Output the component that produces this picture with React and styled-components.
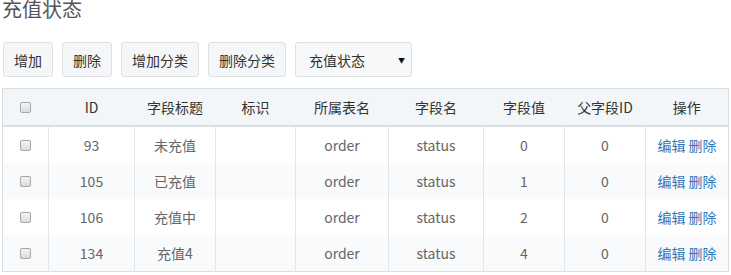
import React from "react";
import styled, { createGlobalStyle } from "styled-components";

const GlobalStyle = createGlobalStyle`
  html, body {
    margin: 0;
    padding: 0;
    background: #fff;
    font-family: "Noto Sans CJK SC", "Noto Sans", sans-serif;
    font-size: 14px;
    color: #666;
  }
`;

const rows = [
  { id: 93, title: "未充值", table: "order", field: "status", value: 0, parent: 0 },
  { id: 105, title: "已充值", table: "order", field: "status", value: 1, parent: 0 },
  { id: 106, title: "充值中", table: "order", field: "status", value: 2, parent: 0 },
  { id: 134, title: "充值4", table: "order", field: "status", value: 4, parent: 0 },
];

const columns = [
  { label: "", width: 46 },
  { label: "ID", width: 86 },
  { label: "字段标题", width: 81 },
  { label: "标识", width: 80 },
  { label: "所属表名", width: 93 },
  { label: "字段名", width: 95 },
  { label: "字段值", width: 81 },
  { label: "父字段ID", width: 81 },
  { label: "操作", width: 83 },
];

export default function App() {
  return (
    <>
      <GlobalStyle />
      <Page>
        <Title>充值状态</Title>
        <Toolbar>
          <Button>增加</Button>
          <Button>删除</Button>
          <Button>增加分类</Button>
          <Button>删除分类</Button>
          <Select>
            <span>充值状态</span>
            <Arrow>▼</Arrow>
          </Select>
        </Toolbar>
        <Table>
          <colgroup>
            {columns.map((c, i) => (
              <col key={i} style={{ width: c.width }} />
            ))}
          </colgroup>
          <thead>
            <tr>
              {columns.map((c, i) => (
                <Th key={i}>{i === 0 ? <Check /> : c.label}</Th>
              ))}
            </tr>
          </thead>
          <tbody>
            {rows.map((r, i) => (
              <Row key={r.id} $striped={i % 2 === 1}>
                <Td><Check /></Td>
                <Td>{r.id}</Td>
                <Td>{r.title}</Td>
                <Td></Td>
                <Td>{r.table}</Td>
                <Td>{r.field}</Td>
                <Td>{r.value}</Td>
                <Td>{r.parent}</Td>
                <Td>
                  <Link>编辑</Link> <Link>删除</Link>
                </Td>
              </Row>
            ))}
          </tbody>
        </Table>
      </Page>
    </>
  );
}

const Page = styled.div`
  padding: 0 3px 0 2px;
`;

const Title = styled.h3`
  margin: -4px 0 0 0;
  font-size: 20px;
  line-height: 26px;
  font-weight: normal;
  color: #555;
`;

const Toolbar = styled.div`
  display: flex;
  gap: 9px;
  margin-top: 20px;
  padding-left: 1px;
`;

const Button = styled.div`
  height: 35px;
  box-sizing: border-box;
  padding: 0 10px;
  display: flex;
  align-items: center;
  border: 1px solid #dde1e4;
  border-radius: 3px;
  background: #f4f6f8;
  color: #333;
  font-size: 14px;
`;

const Select = styled(Button)`
  width: 117px;
  padding: 0 6px 0 13px;
  justify-content: space-between;
  background: #f7f8f9;
`;

const Arrow = styled.span`
  font-size: 7px;
  color: #111;
`;

const Table = styled.table`
  margin-top: 11px;
  width: 726px;
  border-collapse: collapse;
  table-layout: fixed;
  border: 1px solid #d9dee2;
`;

const Th = styled.th`
  height: 36px;
  padding: 0;
  background: #f3f6f8;
  border-bottom: 2px solid #d9dee2;
  font-weight: normal;
  color: #333;
  text-align: center;
`;

const Row = styled.tr`
  background: ${(p) => (p.$striped ? "#f8fafc" : "#fff")};
`;

const Td = styled.td`
  height: 36px;
  padding: 0;
  text-align: center;
  color: #666;
  border-left: 1px solid #e3e6e8;
  &:first-child {
    border-left: none;
  }
`;

const Check = styled.span`
  display: inline-block;
  width: 11px;
  height: 11px;
  box-sizing: border-box;
  border: 1px solid #a7a7a7;
  border-radius: 2px;
  background: linear-gradient(#f4f4f4, #dcdcdc);
  vertical-align: middle;
  margin-top: -3px;
`;

const Link = styled.a`
  color: #3276b8;
  cursor: pointer;
`;
